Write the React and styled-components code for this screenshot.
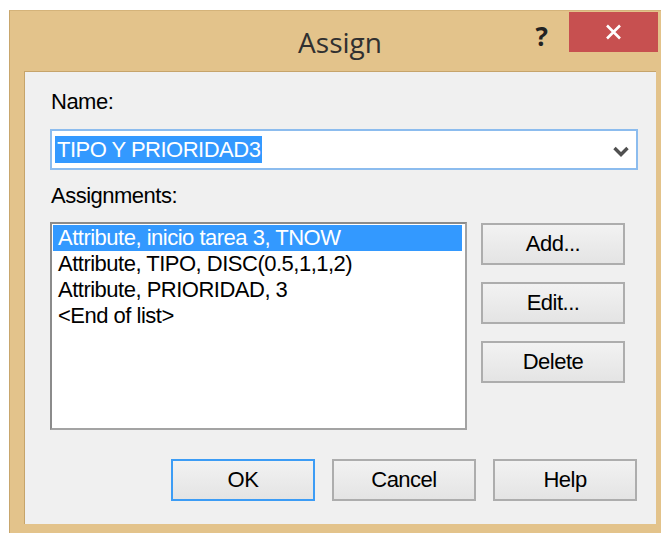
import React from "react";
import styled, { createGlobalStyle } from "styled-components";

const GlobalStyle = createGlobalStyle`
  html, body {
    margin: 0;
    padding: 0;
    background: #ffffff;
    overflow: hidden;
  }
`;

const Window = styled.div`
  box-sizing: border-box;
  margin: 10px 0 0 9px;
  width: 662px;
  height: 524px;
  display: flex;
  flex-direction: column;
  padding: 0 15px 10px 14px;
  background: #e3c38b;
  border-top: 1px solid #d4b37a;
  border-left: 1px solid #c8a66c;
`;

const TitleBar = styled.div`
  height: 60px;
  display: grid;
  grid-template-columns: 1fr auto 1fr;
  align-items: start;
`;

const Title = styled.div`
  margin-top: 14px;
  font-family: "Open Sans", "Noto Sans", sans-serif;
  font-size: 28px;
  line-height: 34px;
  color: #303030;
`;

const Caption = styled.div`
  display: flex;
  justify-content: flex-end;
  align-items: flex-start;
  margin-right: -2px;
`;

const HelpGlyph = styled.span`
  margin: 8px 21px 0 0;
  font-family: "Open Sans", sans-serif;
  font-weight: 700;
  font-size: 26px;
  line-height: 34px;
  color: #222;
`;

const CloseButton = styled.div`
  margin-top: 1px;
  width: 89px;
  height: 40px;
  display: flex;
  align-items: center;
  justify-content: center;
  background: #c75050;
`;

const Client = styled.div`
  flex: 1;
  display: flex;
  flex-direction: column;
  padding: 17px 18px 0 25px;
  background: #f0f0f0;
  border-top: 1px solid #c6a46b;
  border-left: 1px solid #c6a46b;
  font-family: "Liberation Sans", Arial, sans-serif;
  font-size: 22px;
  line-height: 26px;
  letter-spacing: -0.5px;
  color: #000;
`;

const Label = styled.div`
  padding-left: 1px;
  margin-bottom: ${(p) => p.$gap}px;
`;

const Combo = styled.div`
  box-sizing: border-box;
  height: 41px;
  display: flex;
  align-items: flex-start;
  justify-content: space-between;
  padding: 5px 7px 0 3px;
  margin-bottom: 13px;
  background: #fff;
  border: 2px solid #8cbcee;
`;

const Selected = styled.span`
  display: inline-block;
  padding: 0 2px;
  line-height: 27px;
  background: #3399ff;
  color: #fff;
`;

const Chevron = styled.svg`
  margin-top: 10px;
`;

const Middle = styled.div`
  display: flex;
  margin-top: 13px;
`;

const ListBox = styled.div`
  box-sizing: border-box;
  width: 417px;
  height: 208px;
  padding: 1px 3px 0 1px;
  background: #fff;
  border: 2px solid #a3a3a3;
  border-top-color: #8b8b8b;
  border-left-color: #8b8b8b;
`;

const Row = styled.div`
  height: 26px;
  padding-left: 5px;
  white-space: nowrap;
  background: ${(p) => (p.$active ? "#3399ff" : "transparent")};
  color: ${(p) => (p.$active ? "#fff" : "#000")};
`;

const SideButtons = styled.div`
  display: flex;
  flex-direction: column;
  gap: 17px;
  margin-left: 14px;
  padding-top: 1px;
`;

const Button = styled.div`
  box-sizing: border-box;
  width: 144px;
  height: 42px;
  display: flex;
  align-items: center;
  justify-content: center;
  background: linear-gradient(#f2f2f2, #e4e4e4);
  border: 2px solid ${(p) => (p.$focused ? "#3c9cf5" : "#adadad")};
`;

const Footer = styled.div`
  display: flex;
  justify-content: flex-end;
  gap: 17px;
  margin: 29px 1px 0 0;
`;

const assignments = [
  "Attribute, inicio tarea 3, TNOW",
  "Attribute, TIPO, DISC(0.5,1,1,2)",
  "Attribute, PRIORIDAD, 3",
  "<End of list>",
];

export default function App() {
  return (
    <>
      <GlobalStyle />
      <Window>
        <TitleBar>
          <span />
          <Title>Assign</Title>
          <Caption>
            <HelpGlyph>?</HelpGlyph>
            <CloseButton>
              <svg width="17" height="16" viewBox="0 0 17 16">
                <path d="M2 1.5 L15 14.5 M15 1.5 L2 14.5" stroke="#fff" strokeWidth="2.6" />
              </svg>
            </CloseButton>
          </Caption>
        </TitleBar>
        <Client>
          <Label $gap={14}>Name:</Label>
          <Combo>
            <Selected>TIPO Y PRIORIDAD3</Selected>
            <Chevron width="16" height="12" viewBox="0 0 16 12">
              <path d="M1.5 2 L8 8.5 L14.5 2" fill="none" stroke="#505050" strokeWidth="3.4" />
            </Chevron>
          </Combo>
          <Label $gap={0}>Assignments:</Label>
          <Middle>
            <ListBox>
              {assignments.map((a, i) => (
                <Row key={a} $active={i === 0}>
                  {a}
                </Row>
              ))}
            </ListBox>
            <SideButtons>
              <Button>Add...</Button>
              <Button>Edit...</Button>
              <Button>Delete</Button>
            </SideButtons>
          </Middle>
          <Footer>
            <Button $focused>OK</Button>
            <Button>Cancel</Button>
            <Button>Help</Button>
          </Footer>
        </Client>
      </Window>
    </>
  );
}
